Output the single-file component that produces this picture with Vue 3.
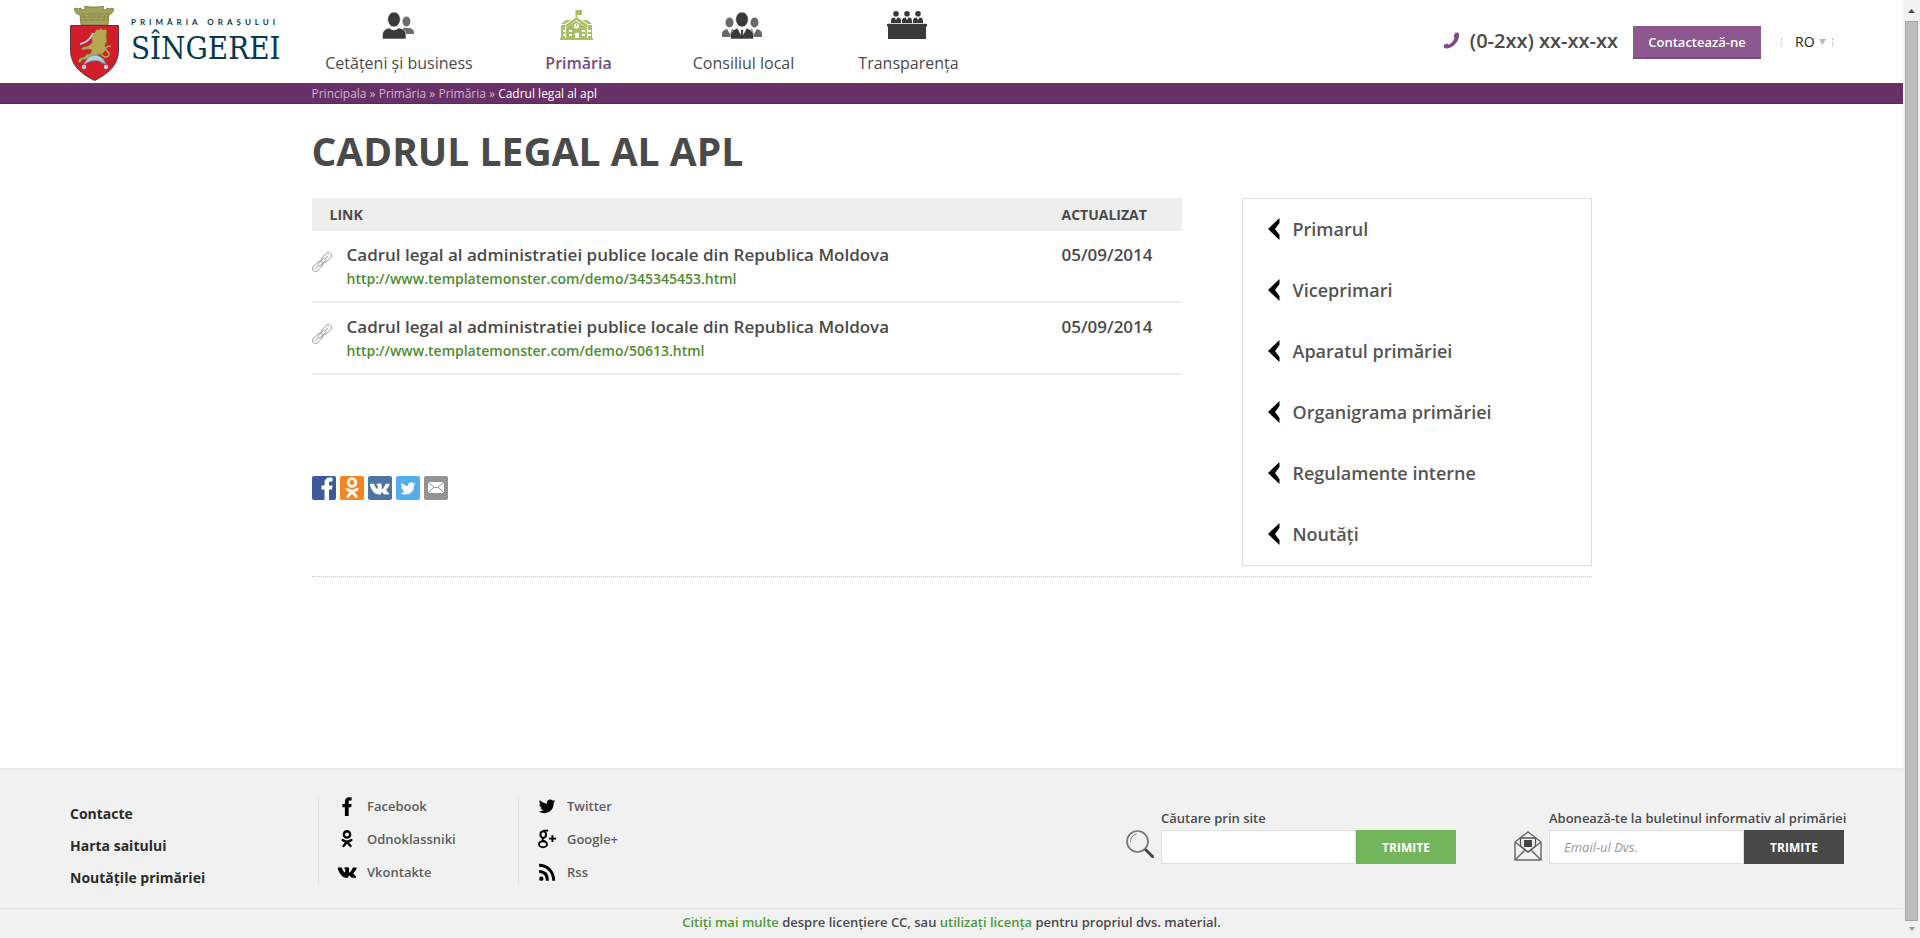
<script setup>
import { ref } from 'vue'

const query = ref('')
const email = ref('')
const language = ref('RO')

const nav = [
  { label: 'Cetățeni și business', icon: 'people' },
  { label: 'Primăria', icon: 'hall', active: true },
  { label: 'Consiliul local', icon: 'council' },
  { label: 'Transparența', icon: 'panel' },
]
const crumbs = ['Principala', 'Primăria', 'Primăria']
const documents = [
  { title: 'Cadrul legal al administratiei publice locale din Republica Moldova', url: 'http://www.templatemonster.com/demo/345345453.html', date: '05/09/2014' },
  { title: 'Cadrul legal al administratiei publice locale din Republica Moldova', url: 'http://www.templatemonster.com/demo/50613.html', date: '05/09/2014' },
]
const sections = ['Primarul', 'Viceprimari', 'Aparatul primăriei', 'Organigrama primăriei', 'Regulamente interne', 'Noutăți']
const shares = ['facebook', 'odnoklassniki', 'vkontakte', 'twitter', 'mail']
const siteLinks = ['Contacte', 'Harta saitului', 'Noutățile primăriei']
const social = [
  [
    { label: 'Facebook', icon: 'facebook' },
    { label: 'Odnoklassniki', icon: 'odnoklassniki' },
    { label: 'Vkontakte', icon: 'vkontakte' },
  ],
  [
    { label: 'Twitter', icon: 'twitter' },
    { label: 'Google+', icon: 'google' },
    { label: 'Rss', icon: 'rss' },
  ],
]
</script>

<template>
  <div class="window">
    <svg class="defs" aria-hidden="true">
      <symbol id="facebook" viewBox="0 0 24 24">
        <path d="M9.500 24V13.500H6.500V9.500h3V7c0-3.600 1.900-5.500 5.200-5.500h2.800v4h-1.900c-1.300 0-1.600.6-1.600 1.800v2.200h3.500l-.5 4h-3V24z" />
      </symbol>
      <symbol id="odnoklassniki" viewBox="0 0 24 24">
        <g fill="none" stroke="currentColor" stroke-width="2.800" stroke-linecap="round">
          <circle cx="12" cy="6.500" r="3.800" />
          <path d="M6.800 13.200c3.200 2.400 7.200 2.400 10.400 0M12 15.500l-4.200 5M12 15.500l4.200 5" />
        </g>
      </symbol>
      <symbol id="vkontakte" viewBox="0 0 24 24">
        <path d="M1.500 6.500h4.200c1 2.800 2 4.700 3.400 6 .6-.2.800-.7.800-2.600 0-1.700-.4-2.300-1.700-2.500.8-.9 2-1.200 3.700-1.200 1.800 0 2.600.3 2.600 1.700v4.300c.2.700.8.600 1.300.1 1.300-1.400 2.100-3 3-5.100.2-.5.400-.7.900-.7h3.300c.6 0 .8.300.6.900-.6 1.900-2 3.500-3.800 5.700-.4.600-.4.800.1 1.300 1.200 1.100 2.300 2.100 2.900 3.300.3.700 0 1.200-.7 1.200h-3.800c-1.600 0-2.300-2.500-4-2.700-.6 0-.5 2.100-.9 2.500-.2.200-.7.200-1.600.2-6 0-8.600-5-10.900-11.200-.1-.6.100-1 .600-1.200z" />
      </symbol>
      <symbol id="twitter" viewBox="0 0 24 24">
        <path d="M22 6.100c-.7.400-1.500.6-2.300.7.800-.5 1.500-1.300 1.800-2.200-.8.400-1.700.8-2.600 1C16 2.700 11.200 4.700 11.900 9.200 8.500 9 5.500 7.400 3.500 4.900c-1.100 1.900-.6 4.200 1.200 5.500-.7 0-1.300-.2-1.800-.5 0 1.900 1.400 3.600 3.200 4-.6.200-1.200.2-1.800.1.500 1.600 2 2.800 3.800 2.800-1.700 1.300-3.900 1.900-6.100 1.700 8.200 5 18.300.6 18-10.300.8-.6 1.500-1.300 2-2.100z" />
      </symbol>
      <symbol id="google" viewBox="0 0 24 24">
        <g fill="none" stroke="currentColor">
          <ellipse cx="7.500" cy="6.700" rx="3.400" ry="4" stroke-width="2.500" />
          <ellipse cx="7.200" cy="18.200" rx="4.800" ry="3.600" stroke-width="2.300" />
          <path d="M8 2h5.500M8 10.500c-2.700 2.300-1.500 3 1 4l2 2" stroke-width="2" />
          <path d="M18.500 7.500v8M14.500 11.500h8.500" stroke-width="2.200" />
        </g>
      </symbol>
      <symbol id="rss" viewBox="0 0 24 24">
        <circle cx="5.200" cy="20" r="2.600" />
        <path d="M2.500 11.500c6.500 0 10 4 10 11M2.500 4C12 4 20 11 20 22.500" fill="none" stroke="currentColor" stroke-width="3.600" />
      </symbol>
      <symbol id="mail" viewBox="0 0 24 24">
        <path d="M4 6h16v11H4z" />
        <path d="M4 6l6.500 5.500h3L20 6M4 17l6-6M20 17l-6-6" fill="none" stroke="#939393" stroke-width="1" />
      </symbol>
    </svg>

    <div class="page">
      <header class="header">
        <a class="logo" href="#">
          <svg class="crest" viewBox="0 0 49 75" aria-hidden="true">
            <path d="M6 7L4 3l3-1 1 1 3-1v2l4-.5-.5-3 4-.5 1 1h9l1-1 4 .5-.5 3 4 .5V2l3 1 1-1 3 1-2 4-3 2-1 10H11L10 9z" fill="#a5a15b" stroke="#77763f" stroke-width=".8" />
            <path d="M9 8l31 0M10 11h29M11 14h27M14 9v3m5-3v3m5-3v3m5-3v3m6-3v3M16 12v3m6-3v3m6-3v3m6-3v3" stroke="#858345" stroke-width=".7" fill="none" />
            <path d="M.5 19.500h48V43c0 14-7 23-24 31.500C7.500 66 .5 57 .5 43z" fill="#d01f2b" stroke="#5f3638" stroke-width="1" />
            <path d="M25 26l2-3 2 1 2-2 2 2 3-1 1 3-1 4 1 5-2 4 1 5-4 4-5 1 3 3 4 1 1 4-3 1-3-4-5 0-4 1-3-2-5 1-2 3-2-2 2-3 4-1 3-3 3 0 2-4-4-1-5 1-2-1 2-2 5-1 4-3 0-4-2-3z" fill="#b5a653" stroke="#7d6c2b" stroke-width=".7" />
            <path d="M31 48c6 7 11 0 6-3-3-2-1-5 4-5" fill="none" stroke="#b5a653" stroke-width="1.600" />
            <path d="M10 38c6-1 10-4 13-11" fill="none" stroke="#c7dced" stroke-width="1.800" />
            <path d="M14 59c4-13 18-13 22 0-6-6-16-6-22 0z" fill="#b2cfe4" stroke="#6d88a7" stroke-width=".7" />
            <circle cx="14" cy="61" r="2.200" fill="#b2cfe4" /><circle cx="36" cy="61" r="2.200" fill="#b2cfe4" />
          </svg>
          <span class="brand">
            <span class="brand-small">PRIMĂRIA ORAȘULUI</span>
            <span class="brand-name">SÎNGEREI</span>
          </span>
        </a>

        <nav class="nav">
          <a v-for="item in nav" :key="item.label" href="#" :class="{ active: item.active }">
            <svg v-if="item.icon === 'people'" viewBox="0 0 40 32">
              <g fill="#6d6d6d"><ellipse cx="29.500" cy="11.500" rx="4" ry="5" /><path d="M26 18h7c3 1 4 2 4 6H26z" /></g>
              <g fill="#3a3a3a" stroke="#fff" stroke-width=".6"><ellipse cx="17" cy="9.500" rx="6.300" ry="7.500" /><path d="M5.500 29v-4c0-5 4-6.500 7-7 3 2.500 6 2.500 9 0 4 .5 7.500 2 7.500 7v4z" /></g>
            </svg>
            <svg v-else-if="item.icon === 'hall'" viewBox="0 0 40 32" fill="#a9bf67">
              <path d="M19.200 0H25v5h-5v4h-1.500V0zM19.500 7l11 8v2h-2l-9-7-9 7h-2v-2zM9 10h5l-6 4H4zM25 10h5l5 4h-4zM4 15h4v13H4zM31 15h4v13h-4zM9 18l10-7 11 7v10H9zM3 28h33v2H3z" />
              <circle cx="19.500" cy="16" r="2.500" fill="#fff" />
              <path d="M19.500 14v2h1" stroke="#a9bf67" fill="none" />
              <path d="M18 23h4v5h-4zM6 20h3v2H6zM12 20h3v2h-3zM25 20h3v2h-3zM31 20h3v2h-3zM6 24h3v2H6zM12 24h3v2h-3zM25 24h3v2h-3zM31 24h3v2h-3z" fill="#fff" />
            </svg>
            <svg v-else-if="item.icon === 'council'" viewBox="0 0 40 32">
              <g fill="#696969"><ellipse cx="7.500" cy="12.500" rx="4" ry="5" /><ellipse cx="32.500" cy="12.500" rx="4" ry="5" /><path d="M0 27v-3c0-3 2-4 5-5l3 5 2-5 4 2-3 6zM40 27v-3c0-3-2-4-5-5l-3 5-2-5-4 2 3 6z" /></g>
              <ellipse cx="20" cy="9.500" rx="6.300" ry="7.500" fill="#393939" stroke="#fff" stroke-width=".6" />
              <path d="M8.500 29c-.5-6 0-8 7-11l4 8h1l4-8c7 3 7.500 5 7 11z" fill="#393939" stroke="#fff" stroke-width=".6" />
              <path d="M18.500 20h3l-.7 2 1 5-1.800 2-1.800-2 1-5z" fill="#393939" />
            </svg>
            <svg v-else viewBox="0 0 40 32" fill="#393939">
              <circle cx="9" cy="3.700" r="2.800" /><circle cx="20" cy="3.700" r="2.800" /><circle cx="31" cy="3.700" r="2.800" />
              <path d="M4 13v-2c0-3 2-3.500 3.500-3.500L9 10l1.500-2.500c2 0 3.500.5 3.500 3.500v2zM15 13v-2c0-3 2-3.500 3.500-3.500L20 10l1.500-2.500c2 0 3.500.5 3.500 3.500v2zM26 13v-2c0-3 2-3.500 3.500-3.500L31 10l1.500-2.500c2 0 3.500.5 3.500 3.500v2zM0 14h40v2.500h-1V29H1V16.500H0z" />
              <path d="M1 13.500h38" stroke="#ccd5d5" stroke-width="1" />
            </svg>
            <span>{{ item.label }}</span>
          </a>
        </nav>

        <div class="tools">
          <a class="phone" href="tel:02">
            <svg viewBox="0 0 17 17" aria-hidden="true"><path d="M12.500.500l3 .3C18 7 11 16 4 16.500L1.200 16 .5 13l3.800-1.500 1.500 1.200c2.700-1.500 4.700-4 5.700-6.800L10.700 4z" fill="#7d4c80" /></svg>
            <span>(0-2xx) xx-xx-xx</span>
          </a>
          <button class="contact" type="button">Contactează-ne</button>
          <div class="language">
            <select v-model="language" aria-label="Limba"><option>RO</option></select>
            <svg viewBox="0 0 7 6" aria-hidden="true"><path d="M0 0h7L3.500 6z" fill="#bbb" /></svg>
          </div>
        </div>
      </header>

      <nav class="crumbs">
        <div class="container">
          <template v-for="(crumb, i) in crumbs" :key="i"><a href="#">{{ crumb }}</a> » </template><strong>Cadrul legal al apl</strong>
        </div>
      </nav>

      <main class="container main">
        <h1>CADRUL LEGAL AL APL</h1>
        <div class="columns">
          <section class="content">
            <table>
              <thead>
                <tr><th>LINK</th><th class="date">ACTUALIZAT</th></tr>
              </thead>
              <tbody>
                <tr v-for="doc in documents" :key="doc.url">
                  <td>
                    <div class="doc">
                      <svg viewBox="0 0 20 20" aria-hidden="true">
                        <g transform="rotate(-45 10 10)" fill="none" stroke="#aaa" stroke-width="1">
                          <rect x="-2" y="7" width="12" height="6" rx="3" /><rect x="10" y="7" width="12" height="6" rx="3" />
                          <rect x="5" y="8.500" width="10" height="3" rx="1.500" /><path d="M1 10h4M15 10h4" />
                        </g>
                      </svg>
                      <div>
                        <div class="doc-title">{{ doc.title }}</div>
                        <a :href="doc.url">{{ doc.url }}</a>
                      </div>
                    </div>
                  </td>
                  <td class="date">{{ doc.date }}</td>
                </tr>
              </tbody>
            </table>
            <div class="shares">
              <a v-for="name in shares" :key="name" href="#" :class="name" :aria-label="name">
                <svg><use :href="'#' + name" /></svg>
              </a>
            </div>
          </section>
          <aside class="sidebar">
            <a v-for="section in sections" :key="section" href="#">
              <svg viewBox="0 0 12 22" aria-hidden="true"><path d="M11.500 0v5L7 11l4.500 6v5L0 11z" /></svg>
              <span>{{ section }}</span>
            </a>
          </aside>
        </div>
      </main>

      <footer class="footer">
        <div class="footer-main">
          <nav class="site-links"><a v-for="link in siteLinks" :key="link" href="#">{{ link }}</a></nav>
          <nav v-for="(group, i) in social" :key="i" class="social">
            <a v-for="item in group" :key="item.label" href="#">
              <svg aria-hidden="true"><use :href="'#' + item.icon" /></svg>{{ item.label }}
            </a>
          </nav>
          <div class="forms">
            <form @submit.prevent>
              <label for="query">Căutare prin site</label>
              <svg viewBox="0 0 28 32" aria-hidden="true">
                <g fill="none" stroke="#777"><circle cx="11.500" cy="11.500" r="10.500" stroke-width="1.700" /><path d="M4.500 12c0-4 2-7 6-8" stroke-width="1" /></g>
                <path d="M20 20l6.500 6.500" stroke="#444" stroke-width="3" stroke-linecap="round" />
              </svg>
              <input id="query" v-model="query" type="text" />
              <button class="green" type="submit">TRIMITE</button>
            </form>
            <form @submit.prevent>
              <label for="email">Abonează-te la buletinul informativ al primăriei</label>
              <svg viewBox="0 0 28 32" aria-hidden="true">
                <g fill="none" stroke="#6d6d6d" stroke-width="1.500">
                  <path d="M1 12L14 2l13 10v18H1zM1 12l13 10 13-10M1 30l10-10M27 30L17 20" />
                </g>
                <path d="M6.500 8h15v8L14 22l-7.500-6z" fill="#f1f1f1" stroke="#555" stroke-width="1.300" />
                <path d="M10 10h8v7h-8z" fill="#444" />
              </svg>
              <input id="email" v-model="email" type="email" placeholder="Email-ul Dvs." />
              <button type="submit">TRIMITE</button>
            </form>
          </div>
        </div>
        <p class="license"><a href="#">Citiți mai multe</a> despre licențiere CC, sau <a href="#">utilizați licența</a> pentru propriul dvs. material.</p>
      </footer>
    </div>

    <div class="scrollbar" aria-hidden="true">
      <svg viewBox="0 0 17 20"><path d="M5 13h7L8.500 9z" fill="#505050" /></svg>
      <div class="thumb"></div>
      <svg class="down" viewBox="0 0 17 17"><path d="M6 6h6L9 10z" fill="#999" /></svg>
    </div>
  </div>
</template>

<style>
body { background: #fff; }
</style>

<style scoped>
* { box-sizing: border-box; }
.window { display: grid; grid-template-columns: 1fr 17px; min-height: 100vh; font-family: "Open Sans", sans-serif; color: #4a4a4a; }
a { color: inherit; text-decoration: none; }
button, input, select { font-family: inherit; border: 0; border-radius: 0; }
.defs { display: none; }
.page { display: flex; flex-direction: column; min-width: 0; }
.container { width: 100%; max-width: 1280px; margin: 0 auto; }

.header { display: flex; height: 83px; padding: 0 70px; }
.logo { display: flex; gap: 12px; width: 232px; padding-top: 6px; }
.crest { width: 49px; height: 75px; }
.brand { display: flex; flex-direction: column; gap: 2px; width: 150px; padding-top: 11px; color: #05374f; overflow: hidden; white-space: nowrap; }
.brand-small { font: bold 8px/10px Lato, sans-serif; letter-spacing: 4px; }
.brand-name { font: 31px/38px "DejaVu Serif Condensed", "DejaVu Serif", serif; }
.nav { display: grid; grid-template-columns: 194px 165px 165px 165px; padding-top: 10px; }
.nav a { display: flex; flex-direction: column; align-items: center; gap: 10px; font-size: 16px; line-height: 22px; color: #4a4a4a; }
.nav a.active { color: #7b4a80; font-weight: 600; }
.nav svg { width: 40px; height: 32px; margin-right: 4px; }
.tools { display: flex; align-items: flex-start; margin-left: auto; }
.phone { display: flex; align-items: center; gap: 10px; margin: 27px 15px 0 0; font-size: 20px; line-height: 27px; font-weight: 600; }
.phone svg { width: 17px; height: 17px; }
.contact { width: 128px; height: 33px; margin-top: 26px; padding: 0; background: #8d588f; border-bottom: 2px solid #7b4a7e; color: #fff; font-size: 13px; font-weight: 600; }
.language { display: flex; align-items: center; gap: 4px; margin: 38px 0 0 20px; height: 8px; padding: 0 6px 0 13px; border: dotted #bbb; border-width: 0 1px; }
.language select { appearance: none; background: none; padding: 0; font-size: 14px; line-height: 20px; color: #222; }
.language svg { width: 7px; height: 6px; }

.crumbs { height: 21px; background: #673067; border-bottom: 1px solid #5c285c; color: #d0b5d0; font-size: 12px; line-height: 21px; }
.crumbs strong { color: #fff; font-weight: 400; }

.main { flex: 1; }
h1 { margin: 19px 0 20px; font-size: 39px; line-height: 55px; font-weight: 700; }
.columns { display: grid; grid-template-columns: 870px 350px; justify-content: space-between; padding-bottom: 10px; border-bottom: 1px dotted #ccc; }
table { width: 100%; border-collapse: separate; border-spacing: 0; }
th { height: 33px; padding: 0 18px; background: #eee; text-align: left; font-size: 14px; line-height: 20px; font-weight: 700; }
td { height: 72px; padding: 12px 0 10px; border-bottom: 2px solid #eee; vertical-align: top; }
.date { width: 120px; font-size: 17px; line-height: 24px; font-weight: 600; }
th.date { padding: 0; font-size: 14px; line-height: 20px; font-weight: 700; }
.doc { display: flex; gap: 15px; }
.doc svg { width: 20px; height: 20px; margin-top: 9px; }
.doc-title { font-size: 17px; line-height: 24px; font-weight: 600; }
.doc a { display: block; font-size: 14px; line-height: 24px; font-weight: 600; color: #4d8c2f; }
.shares { display: flex; gap: 4px; margin-top: 101px; }
.shares a { display: flex; align-items: center; justify-content: center; width: 24px; height: 24px; border-radius: 2px; color: #fff; overflow: hidden; }
.shares svg { flex: none; width: 24px; height: 24px; fill: currentColor; }
.shares .facebook { background: #3c5a99; padding-left: 6px; }
.shares .odnoklassniki { background: #f6851f; }
.shares .vkontakte { background: #4c75a3; }
.shares .twitter { background: #55acee; }
.shares .mail { background: #939393; }
.shares .vkontakte svg { width: 21px; height: 21px; }
.shares .twitter svg { width: 18px; height: 18px; }
.sidebar { border: 1px solid #ddd; }
.sidebar a { display: flex; align-items: center; gap: 13px; height: 61px; padding: 0 0 2px 25px; font-size: 18px; font-weight: 600; color: #555; }
.sidebar svg { width: 12px; height: 22px; }

.footer { background: #f1f1f1; border-top: 2px solid #ebebeb; }
.footer-main { display: flex; min-height: 138px; padding: 0 59px 0 70px; }
.site-links { width: 248px; padding-top: 28px; }
.site-links a { display: block; font-size: 14px; line-height: 32px; font-weight: 700; color: #2b2b2b; }
.social { width: 200px; height: 86px; margin-top: 28px; padding-left: 18px; border-left: 1px solid #dfdfdf; }
.social a { display: flex; align-items: center; gap: 10px; height: 15px; margin-bottom: 18px; font-size: 13px; font-weight: 600; color: #5c5c5c; }
.social svg { width: 20px; height: 20px; fill: #000; color: #000; }
.forms { display: flex; gap: 58px; margin-left: auto; padding-top: 38px; }
.forms form { display: grid; grid-template-columns: 35px 195px 100px; grid-template-rows: 22px 34px; }
.forms label { grid-column: 2 / 4; width: 295px; font-size: 13px; line-height: 20px; font-weight: 600; white-space: nowrap; }
.forms form svg, .forms form input, .forms form button { grid-row: 2; }
.forms form svg { width: 28px; height: 32px; }
.forms input { min-width: 0; padding: 0 14px; background: #fff; border: 1px solid #dfdfdf; font-size: 13px; }
.forms input::placeholder { color: #999; font-style: italic; }
.forms button { background: #484848; color: #fff; font-size: 12px; font-weight: 700; }
.forms .green { background: #73b55b; }
.license { margin: 0; padding-bottom: 2px; border-top: 1px solid #dfdfdf; text-align: center; font-size: 13px; line-height: 27px; font-weight: 600; }
.license a { color: #4d9a3c; }

.scrollbar { display: flex; flex-direction: column; background: #f1f1f1; }
.scrollbar svg { flex: none; width: 17px; height: 20px; }
.scrollbar .down { height: 17px; }
.thumb { flex: 1; margin: 1px 2px 0; background: #bcbcbc; border: 1px solid #a6a6a6; }
</style>
